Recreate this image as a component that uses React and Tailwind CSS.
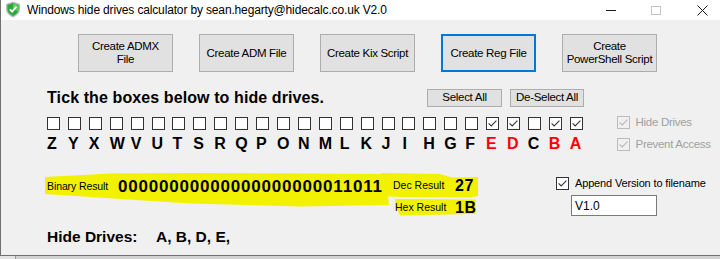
import React from "react";

const LETTERS = "ZYXWVUTSRQPONMLKJIHGFEDCBA".split("");
const HIDDEN = ["E", "D", "B", "A"];

function Box({ checked, disabled }) {
  return (
    <span
      className={`flex h-[13px] w-[13px] shrink-0 items-center justify-center border ${
        disabled ? "border-[#bcbcbc] bg-[#f0f0f0]" : "border-[#333333] bg-white"
      }`}
    >
      {checked && (
        <svg width="11" height="11" viewBox="0 0 11 11">
          <path
            d="M1.6 5.3 L4.2 7.9 L9.4 2.7"
            fill="none"
            stroke={disabled ? "#b8b8b8" : "#333333"}
            strokeWidth="1.1"
          />
        </svg>
      )}
    </span>
  );
}

function Btn({ children, active }) {
  return (
    <div
      className={`flex h-[38px] w-[95px] items-center justify-center bg-[#e1e1e1] text-center text-[11.5px] leading-[13px] tracking-[-0.3px] text-black ${
        active ? "border-2 border-[#0078d7]" : "border border-[#adadad]"
      }`}
    >
      {children}
    </div>
  );
}

function SmallBtn({ children, w }) {
  return (
    <div
      className={`flex h-[18px] ${w} items-center justify-center border border-[#adadad] bg-[#e1e1e1] text-[11.5px] tracking-[-0.3px] text-black`}
    >
      {children}
    </div>
  );
}

function Shield() {
  return (
    <svg width="16" height="17" viewBox="0 0 16 17">
      <path d="M8 0.6 L15 3 L15 8 C15 12 11.8 14.8 8 16.4 C4.2 14.8 1 12 1 8 L1 3 Z" fill="#b9bcbf" />
      <path d="M8 2 L13.6 4 L13.6 8.1 C13.6 11.3 11 13.6 8 15 C5 13.6 2.4 11.3 2.4 8.1 L2.4 4 Z" fill="#2aa83a" />
      <path d="M8 2 L13.6 4 L13.6 8.1 C13.6 9 13.4 9.7 13 10.4 L8 8 Z" fill="#56c95f" />
      <path d="M4.8 8.4 L7.1 10.7 L11.4 5.6" fill="none" stroke="#ffffff" strokeWidth="1.8" />
    </svg>
  );
}

export default function App() {
  return (
    <div className="relative h-[259px] w-[720px] overflow-hidden bg-[#d2d2d2] font-['Liberation_Sans',Arial,sans-serif] text-black">
      <div className="flex h-[256px] flex-col border-b border-l border-[#6f6f6f]">
        {/* title bar */}
        <div className="flex h-[20px] shrink-0 items-center bg-white">
          <div className="ml-[4px] mt-[-2px]">
            <Shield />
          </div>
          <span className="ml-[6px] text-[12px] tracking-[-0.15px]">
            Windows hide drives calculator by sean.hegarty@hidecalc.co.uk V2.0
          </span>
          <div className="ml-auto flex items-center">
            <span className="mr-[35px] h-px w-[10px] bg-[#1a1a1a]" />
            <span className="mr-[36px] h-[9px] w-[10px] border border-[#c4c4c4]" />
            <svg width="11" height="11" viewBox="0 0 11 11" className="mr-[12px]">
              <path d="M0.5 0.5 L10.5 10.5 M10.5 0.5 L0.5 10.5" stroke="#1a1a1a" strokeWidth="1" />
            </svg>
          </div>
        </div>

        {/* form */}
        <div className="relative flex-1 bg-[#f0f0f0]">
          <svg className="absolute left-0 top-0" width="720" height="240" viewBox="0 0 720 240">
            <g transform="translate(-1,-20)" fill="#f2f200">
              <path d="M45 177 L110 173.5 L190 173 L300 173.5 L386 174 L389 205 L300 206.5 L190 203.5 L113 198.5 L45 194 Z" />
              <path d="M381 173 L440 174 L452 177.5 L478 177 L478 196 L470 197.5 L400 197 L381 196 Z" />
              <path d="M395 199 L476 199.5 L475 214 L400 215.5 L396 207 Z" />
            </g>
          </svg>

          {/* top buttons */}
          <div className="mt-[14px] flex gap-[26px] pl-[77px]">
            <Btn>
              Create ADMX
              <br />
              File
            </Btn>
            <Btn>Create ADM File</Btn>
            <Btn>Create Kix Script</Btn>
            <Btn active>Create Reg File</Btn>
            <Btn>
              Create
              <br />
              PowerShell Script
            </Btn>
          </div>

          {/* drives */}
          <div className="mt-[17px] flex">
            <div className="pl-[46px]">
              <div className="flex h-[18px] items-center">
                <span className="w-[380px] text-[16px] font-bold tracking-[0.1px]">
                  Tick the boxes below to hide drives.
                </span>
                <SmallBtn w="w-[75px]">Select All</SmallBtn>
                <div className="w-[8px]" />
                <SmallBtn w="w-[74px]">De-Select All</SmallBtn>
              </div>
              <div className="mt-[10px] flex">
                {LETTERS.map((l) => (
                  <div key={l} className="w-[20.92px]">
                    <Box checked={HIDDEN.includes(l)} />
                  </div>
                ))}
              </div>
              <div className="mt-[6px] flex h-[16px] items-center">
                {LETTERS.map((l) => (
                  <div
                    key={l}
                    className={`w-[20.92px] text-[16px] font-bold leading-[16px] ${
                      HIDDEN.includes(l) ? "text-[#ff0000]" : "text-black"
                    }`}
                  >
                    {l}
                  </div>
                ))}
              </div>
            </div>
            <div className="ml-[26px] mt-[27px] flex flex-col gap-[9px] text-[11.5px] tracking-[-0.3px] text-[#a0a0a0]">
              <div className="flex h-[13px] items-center gap-[6px]">
                <Box checked disabled />
                <span>Hide Drives</span>
              </div>
              <div className="flex h-[13px] items-center gap-[6px]">
                <Box checked disabled />
                <span>Prevent Access</span>
              </div>
            </div>
          </div>

          {/* results */}
          <div className="relative mt-[25px] flex">
            <div className="flex h-[20px] w-[392px] items-center pl-[46px]">
              <span className="w-[71px] text-[10.5px] tracking-[-0.1px]">Binary Result</span>
              <span className="text-[17px] font-bold tracking-[0.8px]">00000000000000000000011011</span>
            </div>
            <div className="flex w-[163px] flex-col">
              <div className="flex h-[18px] items-center">
                <span className="w-[62px] text-[10.5px]">Dec Result</span>
                <span className="text-[16px] font-bold tracking-[0.5px]">27</span>
              </div>
              <div className="mt-[4px] flex h-[18px] items-center">
                <span className="ml-[2px] w-[60px] text-[10.5px]">Hex Result</span>
                <span className="text-[16px] font-bold tracking-[0.5px]">1B</span>
              </div>
            </div>
            <div className="flex flex-col">
              <div className="flex h-[13px] items-center gap-[6px]">
                <Box checked />
                <span className="text-[11px] tracking-[-0.15px]">Append Version to filename</span>
              </div>
              <div className="ml-[15px] mt-[5px] flex h-[21px] w-[86px] items-center border border-[#7a7a7a] bg-white pl-[3px] text-[12px]">
                V1.0
              </div>
            </div>
          </div>

          <div className="relative mt-[13px] flex h-[14px] items-center pl-[46px] text-[15.5px] font-bold">
            <span className="w-[109px]">Hide Drives:</span>
            <span>A, B, D, E,</span>
          </div>
        </div>
      </div>
      <div className="flex h-[3px]">
        <div className="w-[16px] border-r border-[#9a9a9a] bg-[#e4e4e4]" />
      </div>
    </div>
  );
}
